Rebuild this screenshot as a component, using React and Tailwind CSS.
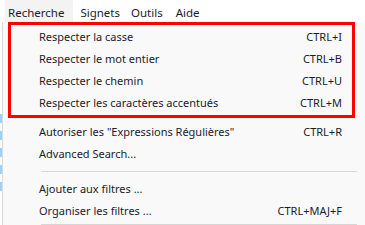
import React from "react";

const topItems = [
  { label: "Respecter la casse", key: "CTRL+I" },
  { label: "Respecter le mot entier", key: "CTRL+B" },
  { label: "Respecter le chemin", key: "CTRL+U" },
  { label: "Respecter les caractères accentués", key: "CTRL+M" },
];

const MenuRow = ({ label, shortcut, inBox }) => (
  <div
    className={
      inBox
        ? "h-[22px] flex items-center justify-between pl-[28px] pr-[10px] pb-[1px]"
        : "h-[22px] flex items-center justify-between pl-[31px] pr-[13px] pb-[1px]"
    }
  >
    <span>{label}</span>
    {shortcut && <span>{shortcut}</span>}
  </div>
);

const App = () => {
  return (
    <div
      className="w-[365px] h-[225px] bg-white overflow-hidden text-[11px] text-[#1b1b2e] leading-none"
      style={{ fontFamily: '"Segoe UI", "Noto Sans", sans-serif' }}
    >
      <div className="h-[22px] flex items-stretch text-[11.5px]">
        <div className="flex items-center pt-[3px] bg-[#f3f3f3] ml-[5px] pl-[3px] pr-[9px]">Recherche</div>
        <div className="flex items-center pt-[3px] pl-[7px] pr-[5px]">Signets</div>
        <div className="flex items-center pt-[3px] pl-[6px] pr-[6px]">Outils</div>
        <div className="flex items-center pt-[3px] px-[7px]">Aide</div>
      </div>

      <div className="flex h-[203px]">
        <div className="w-[2px] flex flex-col gap-[8px] pt-[92px]">
          <div className="h-[9px] bg-[#9fd0f5]" />
          <div className="h-[9px] bg-[#9fd0f5]" />
          <div className="h-[9px] bg-[#9fd0f5]" />
          <div className="h-[9px] bg-[#9fd0f5]" />
          <div className="h-[9px] bg-[#9fd0f5]" />
        </div>
        <div className="flex-1 border-l border-[#dadada] bg-[#f9f9f9] pl-[5px] pr-[10px]">
          <div className="border-[3px] border-[#ff0000] py-[1px]">
            {topItems.map((item) => (
              <MenuRow key={item.label} label={item.label} shortcut={item.key} inBox />
            ))}
          </div>
          <div className="pt-[3px]">
            <MenuRow label={'Autoriser les "Expressions Régulières"'} shortcut="CTRL+R" />
            <MenuRow label="Advanced Search..." />
          </div>
          <div className="py-[6px] pl-[33px] -mr-[2px]">
            <div className="h-px bg-[#d6d6d6]" />
          </div>
          <MenuRow label="Ajouter aux filtres ..." />
          <MenuRow label="Organiser les filtres ..." shortcut="CTRL+MAJ+F" />
          <div className="pt-[2px] pl-[33px] -mr-[2px]">
            <div className="h-px bg-[#d6d6d6]" />
          </div>
        </div>
      </div>
    </div>
  );
};

export default App;
